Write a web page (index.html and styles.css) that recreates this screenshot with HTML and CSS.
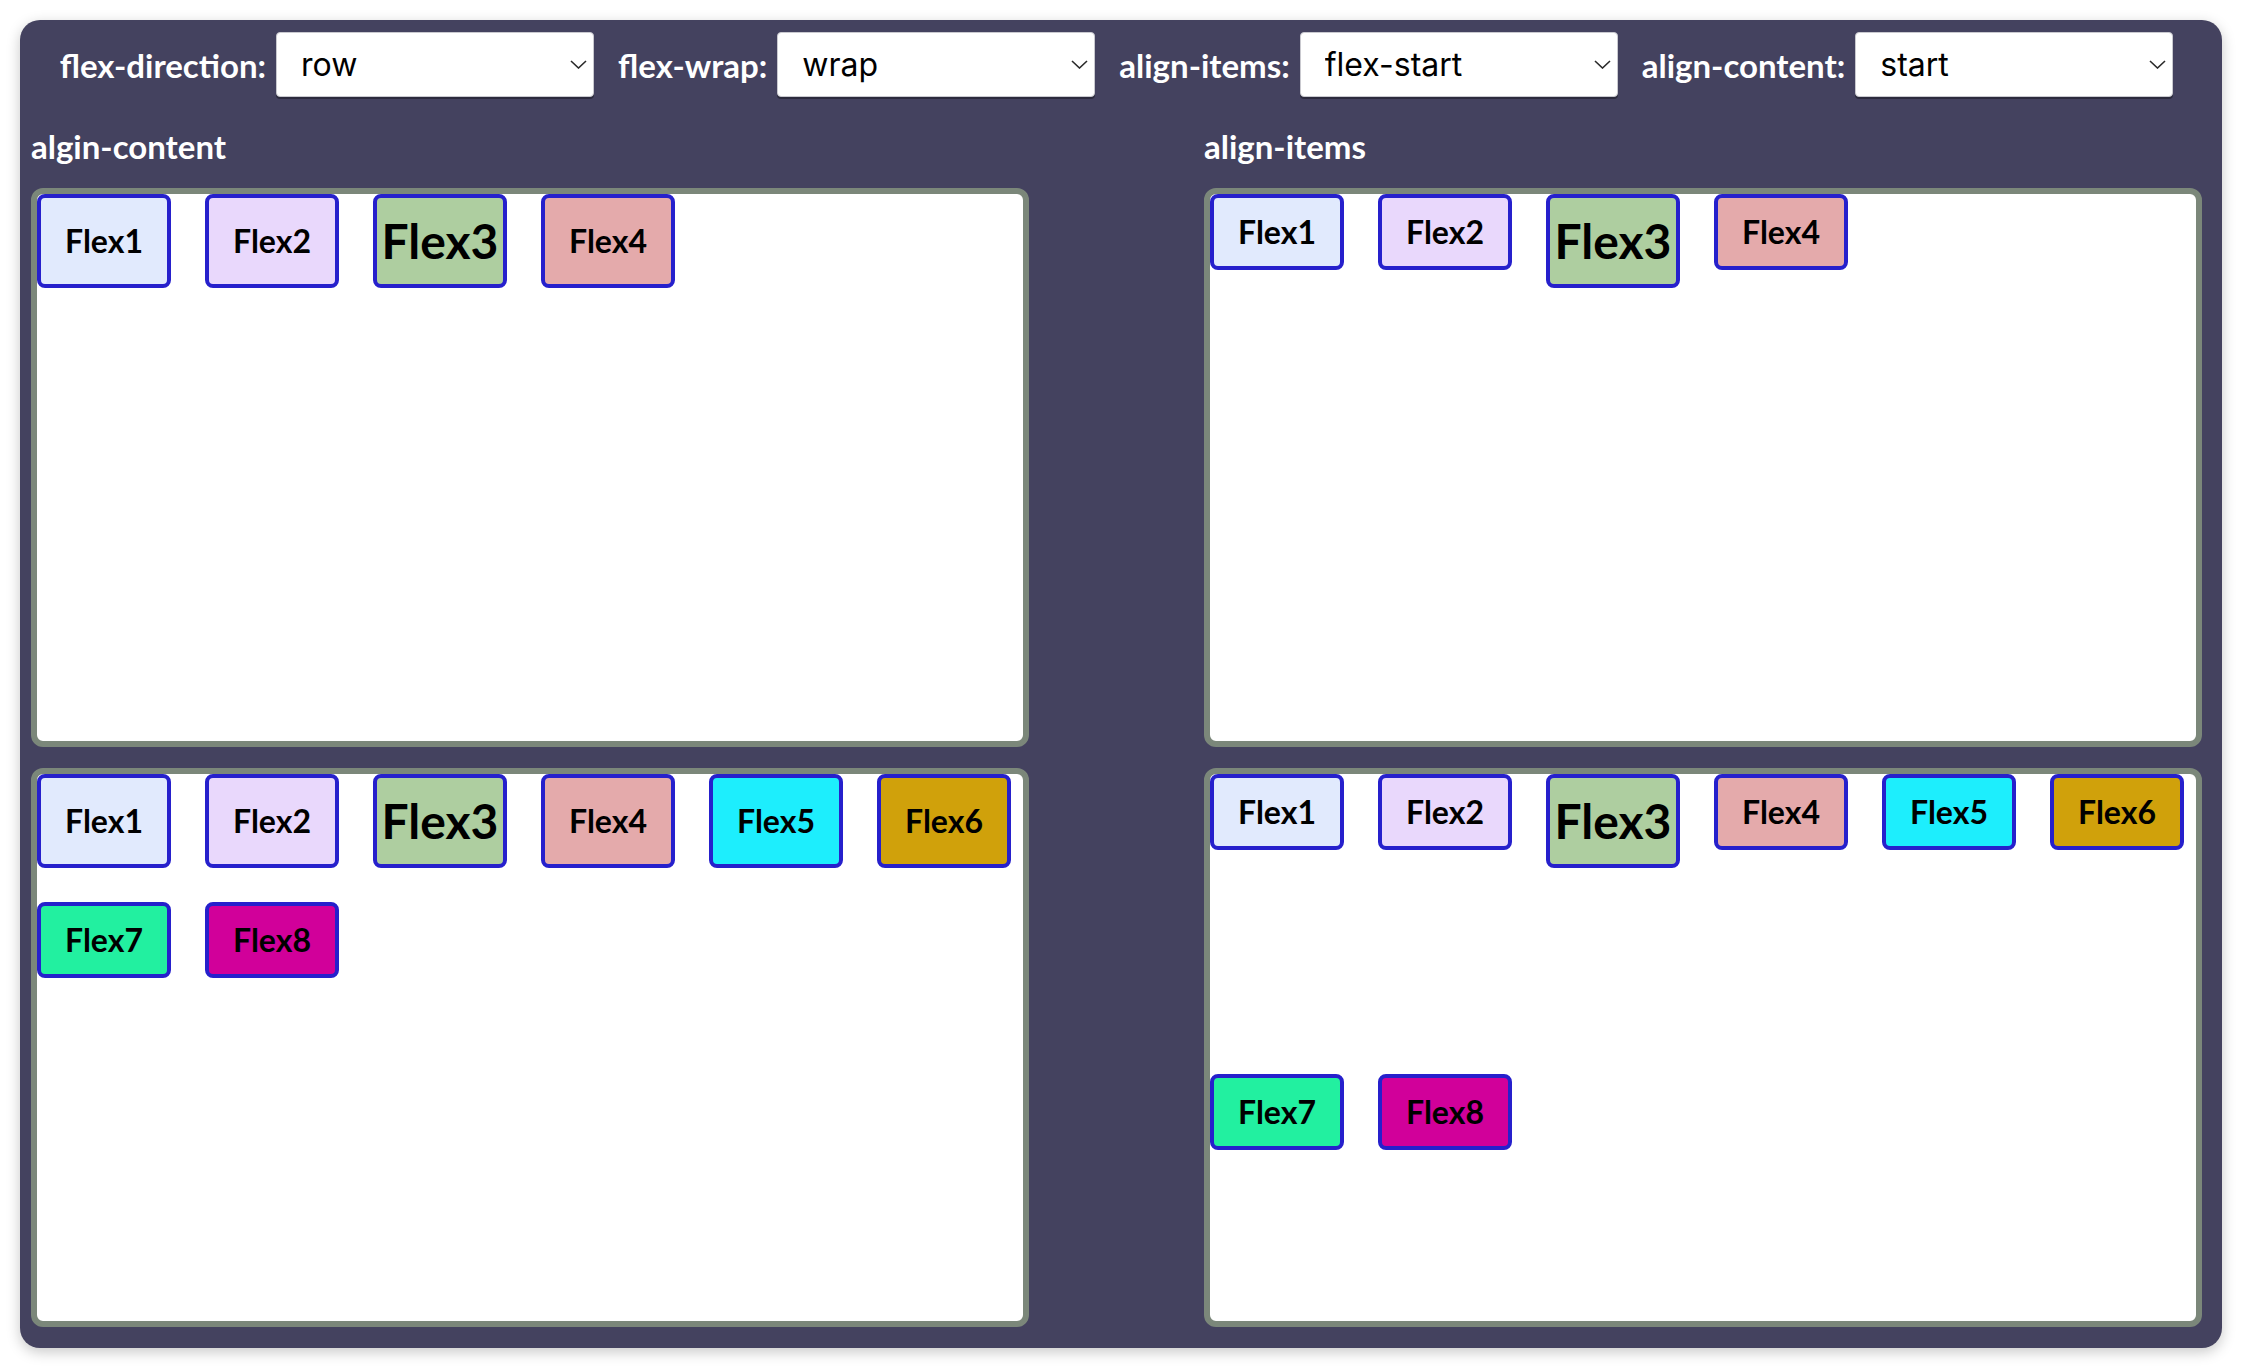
FILE: index.html
```html
<!DOCTYPE html>
<html lang="en">
<head>
<meta charset="utf-8">
<title>Flexbox playground</title>
<link rel="stylesheet" href="styles.css">
</head>
<body>
<div class="panel">
  <div class="toolbar">
    <label class="field">
      <span class="field-label">flex-direction:</span>
      <span class="select-wrap">
        <select class="select">
          <option selected>row</option>
          <option>row-reverse</option>
          <option>column</option>
          <option>column-reverse</option>
        </select>
        <svg class="chev" viewBox="0 0 17 9" width="17" height="9"><polyline points="1,1 8.5,8 16,1" /></svg>
      </span>
    </label>
    <label class="field">
      <span class="field-label">flex-wrap:</span>
      <span class="select-wrap">
        <select class="select">
          <option>nowrap</option>
          <option selected>wrap</option>
          <option>wrap-reverse</option>
        </select>
        <svg class="chev" viewBox="0 0 17 9" width="17" height="9"><polyline points="1,1 8.5,8 16,1" /></svg>
      </span>
    </label>
    <label class="field">
      <span class="field-label">align-items:</span>
      <span class="select-wrap">
        <select class="select">
          <option>stretch</option>
          <option selected>flex-start</option>
          <option>flex-end</option>
          <option>center</option>
          <option>baseline</option>
        </select>
        <svg class="chev" viewBox="0 0 17 9" width="17" height="9"><polyline points="1,1 8.5,8 16,1" /></svg>
      </span>
    </label>
    <label class="field">
      <span class="field-label">align-content:</span>
      <span class="select-wrap">
        <select class="select">
          <option selected>start</option>
          <option>end</option>
          <option>center</option>
          <option>space-between</option>
          <option>space-around</option>
          <option>stretch</option>
        </select>
        <svg class="chev" viewBox="0 0 17 9" width="17" height="9"><polyline points="1,1 8.5,8 16,1" /></svg>
      </span>
    </label>
  </div>

  <div class="demos">
    <section class="demo">
      <h2 class="demo-title">algin-content</h2>
      <div class="boxes">
        <div class="flexbox fb-content">
          <div class="item c1">Flex1</div>
          <div class="item c2">Flex2</div>
          <div class="item c3 big">Flex3</div>
          <div class="item c4">Flex4</div>
        </div>
        <div class="flexbox fb-content">
          <div class="item c1">Flex1</div>
          <div class="item c2">Flex2</div>
          <div class="item c3 big">Flex3</div>
          <div class="item c4">Flex4</div>
          <div class="item c5">Flex5</div>
          <div class="item c6">Flex6</div>
          <div class="item c7">Flex7</div>
          <div class="item c8">Flex8</div>
        </div>
      </div>
    </section>
    <section class="demo">
      <h2 class="demo-title">align-items</h2>
      <div class="boxes">
        <div class="flexbox fb-items">
          <div class="item c1">Flex1</div>
          <div class="item c2">Flex2</div>
          <div class="item c3 big">Flex3</div>
          <div class="item c4">Flex4</div>
        </div>
        <div class="flexbox fb-items">
          <div class="item c1">Flex1</div>
          <div class="item c2">Flex2</div>
          <div class="item c3 big">Flex3</div>
          <div class="item c4">Flex4</div>
          <div class="item c5">Flex5</div>
          <div class="item c6">Flex6</div>
          <div class="item c7">Flex7</div>
          <div class="item c8">Flex8</div>
        </div>
      </div>
    </section>
  </div>
</div>
</body>
</html>
```

FILE: styles.css
```css
html, body {
  margin: 0;
  padding: 0;
  background: #ffffff;
}

body {
  font-family: "Lato", "Open Sans", sans-serif;
}

.panel {
  margin: 20px;
  padding: 12px 20px 21px 11px;
  background: #44425f;
  border-radius: 20px;
  box-shadow: 0 4px 14px rgba(0, 0, 0, 0.22);
}

/* toolbar */
.toolbar {
  display: flex;
  justify-content: center;
  align-items: center;
  gap: 24px;
  height: 65px;
}

.field {
  display: flex;
  align-items: center;
  gap: 10px;
}

.field-label {
  color: #ffffff;
  font-family: "Lato", sans-serif;
  font-weight: 700;
  font-size: 33px;
  line-height: 40px;
  white-space: nowrap;
}

.select-wrap {
  position: relative;
  display: block;
}

.select {
  appearance: none;
  -webkit-appearance: none;
  display: block;
  box-sizing: border-box;
  width: 318px;
  height: 65px;
  margin: 0;
  padding: 0 40px 0 24px;
  border: 1px solid #c9c9cf;
  border-radius: 4px;
  background: #ffffff;
  box-shadow: 0 2px 0 rgba(0, 0, 0, 0.35);
  font-family: "Inter", "Noto Sans", sans-serif;
  font-size: 32px;
  color: #000000;
  outline: none;
}

.chev {
  position: absolute;
  right: 7px;
  top: 28px;
  width: 17px;
  height: 9px;
  pointer-events: none;
}

.chev polyline {
  fill: none;
  stroke: #2a2a2a;
  stroke-width: 1.6;
}

/* demos */
.demos {
  display: grid;
  grid-template-columns: 998px 998px;
  column-gap: 175px;
}

.demo {
  display: flex;
  flex-direction: column;
}

.demo-title {
  margin: 29px 0 22px;
  color: #ffffff;
  font-weight: 700;
  font-size: 33px;
  line-height: 40px;
}

.boxes {
  display: flex;
  flex-direction: column;
  gap: 21px;
}

.flexbox {
  box-sizing: border-box;
  height: 559px;
  border: 6px solid #7b877a;
  border-radius: 12px;
  background: #ffffff;
  display: flex;
  flex-direction: row;
  flex-wrap: wrap;
  gap: 34px;
}

.fb-content {
  align-content: start;
}

.fb-items {
  align-items: flex-start;
}

.item {
  box-sizing: border-box;
  width: 134px;
  padding: 15px 0;
  border: 4px solid #2620cc;
  border-radius: 8px;
  display: flex;
  align-items: center;
  justify-content: center;
  font-family: "Lato", sans-serif;
  font-weight: 700;
  font-size: 32px;
  line-height: 38px;
  color: #000000;
}

.item.big {
  font-size: 48px;
  line-height: 56px;
}

.c1 { background: #e1eafd; }
.c2 { background: #e9d8fc; }
.c3 { background: #aecea0; }
.c4 { background: #e4aaab; }
.c5 { background: #1deefd; }
.c6 { background: #d0a10b; }
.c7 { background: #22f0a0; }
.c8 { background: #d1009a; }
```
